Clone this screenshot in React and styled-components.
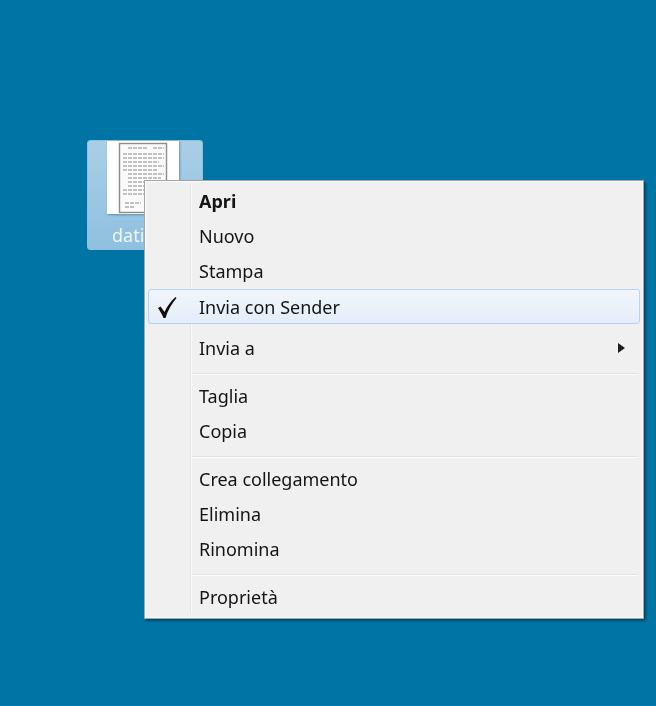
import React from "react";
import styled, { createGlobalStyle } from "styled-components";

const GlobalStyle = createGlobalStyle`
  html, body {
    margin: 0;
    padding: 0;
    background: #0074a4;
  }
`;

const Desktop = styled.div`
  position: relative;
  width: 656px;
  height: 706px;
  overflow: hidden;
  background: #0074a4;
  font-family: "Noto Sans", "Open Sans", sans-serif;
  filter: blur(0.35px);
`;

const FileTile = styled.div`
  position: absolute;
  left: 87px;
  top: 140px;
  width: 116px;
  height: 110px;
  box-sizing: border-box;
  border: 1px solid #8fc0dd;
  border-radius: 3px;
  background: linear-gradient(180deg, #a9cfe6 0%, #8fc0e0 100%);
  display: flex;
  flex-direction: column;
  align-items: center;
`;

const Thumb = styled.svg`
  display: block;
  margin-left: -5px;
  flex: none;
  filter: drop-shadow(1px 1px 1px rgba(40, 70, 90, 0.45));
`;

const FileName = styled.div`
  align-self: flex-start;
  margin: 9px 0 0 24px;
  color: #eef6fb;
  font-size: 18px;
  line-height: 24px;
`;

const Menu = styled.div`
  position: absolute;
  left: 144px;
  top: 180px;
  width: 500px;
  height: 439px;
  box-sizing: border-box;
  padding: 2px 3px 3px 3px;
  background: #f0f0f0;
  border: 1px solid #a0a6aa;
  box-shadow: inset 0 0 0 1px #fafafa, 2px 2px 2px rgba(0, 30, 50, 0.5);
  display: flex;
  flex-direction: column;
`;

const Gutter = styled.div`
  position: absolute;
  left: 45px;
  top: 4px;
  bottom: 4px;
  width: 2px;
  background: linear-gradient(90deg, #e2e3e3 50%, #fafafa 50%);
`;

const Row = styled.div`
  position: relative;
  flex: none;
  height: ${(p) => p.$height || 35}px;
  margin-top: ${(p) => p.$gap || 0}px;
  box-sizing: border-box;
  display: flex;
  align-items: center;
  padding-left: 50px;
  padding-right: 14px;
  color: #141414;
  font-size: 18px;
  font-weight: ${(p) => (p.$bold ? 700 : 400)};
  border: 1px solid ${(p) => (p.$active ? "#b6d3f7" : "transparent")};
  border-radius: 3px;
  background: ${(p) =>
    p.$active ? "linear-gradient(180deg, #f2f6fb 0%, #e3edf9 100%)" : "none"};
`;

const Label = styled.span`
  flex: 1;
`;

const Check = styled.svg`
  position: absolute;
  left: 6px;
  top: 5px;
`;

const Arrow = styled.div`
  width: 0;
  height: 0;
  border-left: 7px solid #1c1c1c;
  border-top: 5.5px solid transparent;
  border-bottom: 5.5px solid transparent;
`;

const Separator = styled.div`
  flex: none;
  height: 2px;
  margin: ${(p) => p.$top}px 2px ${(p) => p.$bottom}px 44px;
  background: linear-gradient(180deg, #e1e2e2 50%, #fbfbfb 50%);
`;

const lines = [
  [127, 148, 147], [152, 148, 163], [122, 154, 163], [122, 158, 163], [122, 162, 158],
  [122, 166, 163], [122, 170, 156], [127, 174, 163], [127, 178, 160], [127, 182, 163],
  [127, 186, 156], [122, 190, 163], [122, 194, 148], [124, 203, 140], [124, 207, 134],
];

const Page = () => (
  <Thumb width="72" height="73" viewBox="106 141 72 73">
    <rect x="106" y="141" width="72" height="73" fill="#fff" />
    <rect x="118.5" y="143.5" width="47" height="69" fill="#fafafa" stroke="#8c8c8c" strokeWidth="1.4" />
    {lines.map(([x1, y, x2], i) => (
      <line key={i} x1={x1} y1={y} x2={x2} y2={y} stroke="#b0b0b0" strokeWidth="1.5" strokeDasharray="4 1" />
    ))}
  </Thumb>
);

const App = () => {
  return (
    <Desktop>
      <GlobalStyle />
      <FileTile>
        <Page />
        <FileName>dati</FileName>
      </FileTile>
      <Menu>
        <Gutter />
        <Row $bold>
          <Label>Apri</Label>
        </Row>
        <Row>
          <Label>Nuovo</Label>
        </Row>
        <Row>
          <Label>Stampa</Label>
        </Row>
        <Row $active $gap={1}>
          <Check width="24" height="24" viewBox="0 0 24 24">
            <path d="M3 13 L5.5 11.5 L9.5 17 C12 11.5 15.5 6.5 20.5 2 L21.5 3 C16.5 9 13 15 10.5 23 L8.5 23 C7 19 5 16 3 13 Z" fill="#0c0c0c" />
          </Check>
          <Label>Invia con Sender</Label>
        </Row>
        <Row $gap={6}>
          <Label>Invia a</Label>
          <Arrow />
        </Row>
        <Separator $top={8} $bottom={3} />
        <Row>
          <Label>Taglia</Label>
        </Row>
        <Row>
          <Label>Copia</Label>
        </Row>
        <Separator $top={8} $bottom={3} />
        <Row>
          <Label>Crea collegamento</Label>
        </Row>
        <Row>
          <Label>Elimina</Label>
        </Row>
        <Row>
          <Label>Rinomina</Label>
        </Row>
        <Separator $top={8} $bottom={3} />
        <Row>
          <Label>Proprietà</Label>
        </Row>
      </Menu>
    </Desktop>
  );
};

export default App;
